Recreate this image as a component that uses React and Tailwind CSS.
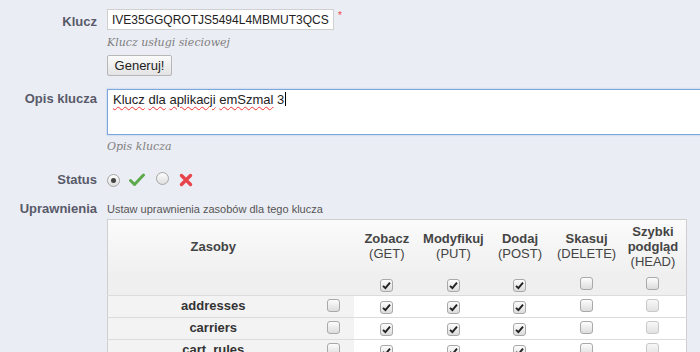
import React from 'react';

const font = { fontFamily: '"Liberation Sans", Arial, sans-serif' };

const resources = ['addresses', 'carriers', 'cart_rules'];
const methods = [
  { name: 'Zobacz', sub: '(GET)', on: true },
  { name: 'Modyfikuj', sub: '(PUT)', on: true },
  { name: 'Dodaj', sub: '(POST)', on: true },
  { name: 'Skasuj', sub: '(DELETE)', on: false },
  { name: 'Szybki podgląd', sub: '(HEAD)', on: false, faint: true },
];

const Checkbox = ({ checked, faint }) => (
  <span
    className={`inline-flex h-[13px] w-[13px] items-center justify-center rounded-[3px] border ${
      faint ? 'border-[#c8c8c8] bg-gradient-to-b from-[#f7f7f7] to-[#e2e2e2]' : 'border-[#a9a9a9] bg-gradient-to-b from-[#fdfdfd] to-[#dcdcdc]'
    }`}
  >
    {checked && (
      <svg width="9" height="9" viewBox="0 0 9 9">
        <path d="M1 4.8 L3.4 7.2 L8 1.6" fill="none" stroke="#222" strokeWidth="1.9" />
      </svg>
    )}
  </span>
);

const Radio = ({ checked }) => (
  <span className="inline-flex h-[13px] w-[13px] items-center justify-center rounded-full border border-[#a5a5a5] bg-gradient-to-b from-[#fdfdfd] to-[#dedede]">
    {checked && <span className="h-[5px] w-[5px] rounded-full bg-[#444]" />}
  </span>
);

const Label = ({ children, className = '' }) => (
  <div className={`w-[97px] shrink-0 text-right text-[13px] font-bold text-[#585a69] ${className}`}>{children}</div>
);

const Help = ({ children }) => (
  <div className="text-[11px] italic text-[#7f7f7f]" style={{ fontFamily: '"DejaVu Serif", Georgia, serif' }}>
    {children}
  </div>
);

const Wavy = ({ children }) => (
  <span className="underline decoration-wavy decoration-[#e33] decoration-1 underline-offset-2">{children}</span>
);

export default function App() {
  return (
    <div className="h-[352px] w-[700px] overflow-hidden bg-[#ebedf4] pt-[9px]" style={font}>
      {/* Klucz */}
      <div className="flex gap-[10px]">
        <Label className="pt-[3px]">Klucz</Label>
        <div className="flex flex-col">
          <div className="flex items-start gap-[4px]">
            <div className="flex h-[21px] w-[227px] items-center overflow-hidden whitespace-nowrap border border-[#d0d0d0] bg-white px-[4px] text-[12px] text-[#222]">
              IVE35GGQROTJS5494L4MBMUT3QCS
            </div>
            <span className="text-[10px] leading-[14px] text-[#e44]">*</span>
          </div>
          <div className="mt-[5px] h-[14px]">
            <Help>Klucz usługi sieciowej</Help>
          </div>
          <button className="mt-[6px] h-[21px] w-[65px] rounded-[2px] border border-[#b7b7b7] bg-gradient-to-b from-[#fbfbfb] to-[#e3e3e3] text-[13px] text-[#222]">
            Generuj!
          </button>
        </div>
      </div>

      {/* Opis klucza */}
      <div className="mt-[13px] flex gap-[10px]">
        <Label>Opis klucza</Label>
        <div className="flex flex-1 flex-col">
          <div className="-mr-[20px] h-[46px] border border-[#7da6db] bg-white px-[5px] text-[13px] leading-[18px] text-[#222] shadow-[0_0_2px_#a9c7ee]">
            <Wavy>Klucz</Wavy> <Wavy>dla</Wavy> <Wavy>aplikacji</Wavy> <Wavy>emSzmal</Wavy> 3
            <span className="ml-[1px] inline-block h-[14px] w-px translate-y-[2px] bg-black" />
          </div>
          <div className="mt-[4px] h-[14px]">
            <Help>Opis klucza</Help>
          </div>
        </div>
      </div>

      {/* Status */}
      <div className="mt-[15px] flex items-center gap-[10px]">
        <Label>Status</Label>
        <div className="flex items-center">
          <Radio checked />
          <svg className="ml-[9px]" width="16" height="14" viewBox="0 0 16 14">
            <path d="M1.5 7.5 L5.5 11.5 L14.5 2" fill="none" stroke="#5daa4d" strokeWidth="3" strokeLinecap="round" strokeLinejoin="round" />
          </svg>
          <span className="ml-[11px]">
            <Radio />
          </span>
          <svg className="ml-[10px]" width="14" height="14" viewBox="0 0 14 14">
            <path d="M2.5 2.5 L11.5 11.5 M11.5 2.5 L2.5 11.5" stroke="#e8444b" strokeWidth="3.4" strokeLinecap="round" />
          </svg>
        </div>
      </div>

      {/* Uprawnienia */}
      <div className="mt-[7px] flex gap-[10px]">
        <Label>Uprawnienia</Label>
        <div className="flex flex-col">
          <div className="pt-[2px] text-[11px] text-[#555]">Ustaw uprawnienia zasobów dla tego klucza</div>
          <table className="mt-[1px] w-[580px] table-fixed border-collapse border border-[#cfcfcf] text-[13px]">
            <colgroup>
              <col className="w-[211px]" />
              <col className="w-[35px]" />
              <col />
              <col />
              <col />
              <col />
              <col />
            </colgroup>
            <thead>
              <tr className="h-[54px] bg-gradient-to-b from-[#fbfbfb] to-[#f0f0f0] text-[#444]">
                <th className="font-bold">Zasoby</th>
                <th />
                {methods.map((m) => (
                  <th key={m.sub} className="px-[2px] leading-[15px]">
                    <div className="font-bold">{m.name}</div>
                    <div className="font-normal">{m.sub}</div>
                  </th>
                ))}
              </tr>
            </thead>
            <tbody>
              <tr className="h-[22px] bg-[#efefef]">
                <td />
                <td />
                {methods.map((m) => (
                  <td key={m.sub} className="text-center align-middle">
                    <span className="inline-flex translate-y-[2px]">
                      <Checkbox checked={m.on} />
                    </span>
                  </td>
                ))}
              </tr>
              {resources.map((r) => (
                <tr key={r} className="h-[22px] border-t border-[#dcdcdc]">
                  <td className="bg-[#f3f3f3] text-center font-bold text-[#333]">{r}</td>
                  <td className="bg-[#f3f3f3] text-center">
                    <span className="inline-flex -translate-x-[3px] translate-y-[2px]">
                      <Checkbox />
                    </span>
                  </td>
                  {methods.map((m) => (
                    <td key={m.sub} className="bg-white text-center">
                      <span className="inline-flex translate-y-[2px]">
                        <Checkbox checked={m.on} faint={m.faint} />
                      </span>
                    </td>
                  ))}
                </tr>
              ))}
            </tbody>
          </table>
        </div>
      </div>
    </div>
  );
}
